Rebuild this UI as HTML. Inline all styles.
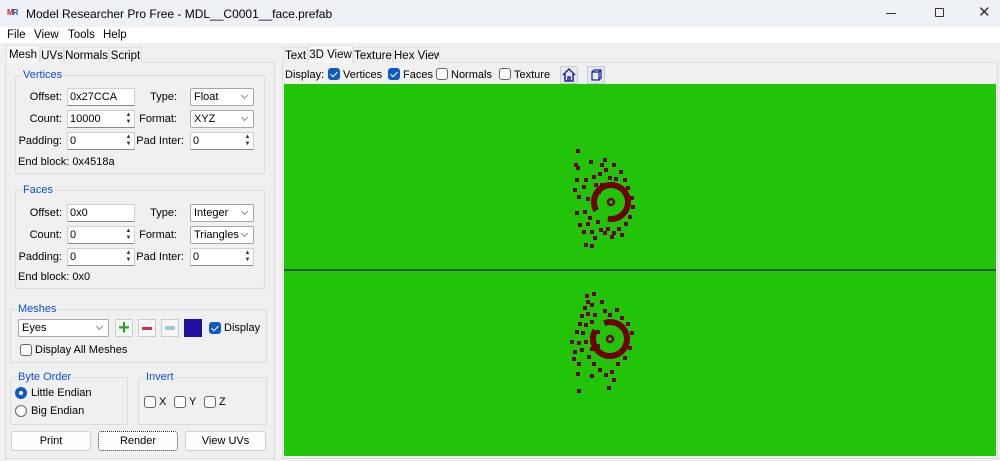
<!DOCTYPE html>
<html><head><meta charset="utf-8"><style>
*{box-sizing:border-box;margin:0;padding:0}
body{width:1000px;height:461px;overflow:hidden;background:#f0f0f0;font-family:"Liberation Sans",sans-serif;font-size:11px;color:#000;position:relative}
.a{position:absolute;white-space:nowrap}
.title{left:0;top:0;width:1000px;height:27px;background:#eef1f6}
.menu{left:0;top:27px;width:1000px;height:16px;background:#fff}
.grp{position:absolute;border:1px solid #dcdcdc;border-radius:2px}
.gl{position:absolute;top:-7px;left:6px;background:#f0f0f0;color:#0a4fd6;padding:0 1px;font-size:11px}
.inp{position:absolute;background:#fff;border:1px solid #d0d0d0;border-bottom-color:#888;height:18px;padding:2px 2px;font-size:11px}
.cmb{position:absolute;background:#fff;border:1px solid #a8a8a8;height:18px;padding:2px 3px;font-size:11px;border-radius:2px}
.cmb:after{content:"";position:absolute;right:6px;top:4px;width:4px;height:4px;border-right:1px solid #888;border-bottom:1px solid #888;transform:rotate(45deg)}
.spin{position:absolute;right:1px;top:1px;width:9px;height:14px;font-size:6px;line-height:7px;color:#333;text-align:center}
.lb{position:absolute;text-align:right;width:50px}
.cb{position:absolute;width:12px;height:12px;border:1px solid #666;border-radius:3px;background:#fff}
.cb.on{background:#0f5cc0;border-color:#0f5cc0}
.cb.on:after{content:"";position:absolute;left:3px;top:1px;width:3px;height:6px;border-right:1.5px solid #fff;border-bottom:1.5px solid #fff;transform:rotate(45deg)}
.btn{position:absolute;background:#fdfdfd;border:1px solid #d0d0d0;border-radius:3px;text-align:center;line-height:18px;height:20px}
.tab{position:absolute;top:47px;height:16px;padding-top:2px;background:#f0f0f0;border:1px solid #e2e2e2;border-bottom:none;font-size:11.5px;white-space:nowrap;text-align:center;overflow:hidden}
</style></head><body>
<div class="a title"></div>
<div class="a" style="left:7px;top:8px;font-size:8px;font-weight:bold;color:#d02030;letter-spacing:-1px">M<span style="color:#2050c0">R</span></div>
<div class="a" style="left:26px;top:7px;font-size:12px">Model Researcher Pro Free - MDL__C0001__face.prefab</div>
<div class="a" style="left:886px;top:13px;width:10px;height:1px;background:#333"></div>
<div class="a" style="left:935px;top:8px;width:9px;height:9px;border:1px solid #333;border-radius:1px"></div>
<div class="a" style="left:978px;top:3px;font-size:15px;color:#333">✕</div>
<div class="a menu"></div>
<div class="a" style="left:7px;top:29px;font-size:11.5px">File</div>
<div class="a" style="left:34px;top:29px;font-size:11.5px">View</div>
<div class="a" style="left:68px;top:29px;font-size:11.5px">Tools</div>
<div class="a" style="left:103px;top:29px;font-size:11.5px">Help</div>

<div class="a" style="left:5px;top:62px;width:270px;height:397px;border:1px solid #dcdcdc;background:#f0f0f0"></div>
<div class="tab" style="left:6px;top:45px;height:18px;background:#f9f9f9;padding-top:3px;width:34px">Mesh</div>
<div class="tab" style="left:40px;width:24px">UVs</div>
<div class="tab" style="left:64px;width:45px">Normals</div>
<div class="tab" style="left:109px;width:33px">Script</div>

<div class="grp" style="left:15px;top:75px;width:250px;height:99px"><div class="gl">Vertices</div></div>
<div class="lb" style="left:12px;top:91px">Offset:</div>
<div class="inp" style="left:67px;top:88px;width:68px">0x27CCA</div>
<div class="lb" style="left:127px;top:91px">Type:</div>
<div class="cmb" style="left:190px;top:88px;width:64px">Float</div>
<div class="lb" style="left:12px;top:113px">Count:</div>
<div class="inp" style="left:67px;top:110px;width:68px">10000<div class="spin">▲<br>▼</div></div>
<div class="lb" style="left:127px;top:113px">Format:</div>
<div class="cmb" style="left:190px;top:110px;width:64px">XYZ</div>
<div class="lb" style="left:12px;top:135px">Padding:</div>
<div class="inp" style="left:67px;top:132px;width:68px">0<div class="spin">▲<br>▼</div></div>
<div class="lb" style="left:134px;top:135px">Pad Inter:</div>
<div class="inp" style="left:190px;top:132px;width:64px">0<div class="spin">▲<br>▼</div></div>
<div class="a" style="left:18px;top:156px">End block: 0x4518a</div>

<div class="grp" style="left:15px;top:190px;width:250px;height:99px"><div class="gl">Faces</div></div>
<div class="lb" style="left:12px;top:207px">Offset:</div>
<div class="inp" style="left:67px;top:204px;width:68px">0x0</div>
<div class="lb" style="left:127px;top:207px">Type:</div>
<div class="cmb" style="left:190px;top:204px;width:64px">Integer</div>
<div class="lb" style="left:12px;top:229px">Count:</div>
<div class="inp" style="left:67px;top:226px;width:68px">0<div class="spin">▲<br>▼</div></div>
<div class="lb" style="left:127px;top:229px">Format:</div>
<div class="cmb" style="left:190px;top:226px;width:64px">Triangles</div>
<div class="lb" style="left:12px;top:251px">Padding:</div>
<div class="inp" style="left:67px;top:248px;width:68px">0<div class="spin">▲<br>▼</div></div>
<div class="lb" style="left:134px;top:251px">Pad Inter:</div>
<div class="inp" style="left:190px;top:248px;width:64px">0<div class="spin">▲<br>▼</div></div>
<div class="a" style="left:18px;top:271px">End block: 0x0</div>

<div class="grp" style="left:10px;top:309px;width:257px;height:54px"><div class="gl">Meshes</div></div>
<div class="cmb" style="left:18px;top:319px;width:91px">Eyes</div>
<div class="a" style="left:115px;top:319px;width:18px;height:18px;border:1px solid #ccc;background:#f6f6f6;color:#2ca02c;font-size:20px;font-weight:bold;line-height:16px;text-align:center">+</div>
<div class="a" style="left:138px;top:319px;width:18px;height:18px;border:1px solid #ccc;background:#f6f6f6"><div class="a" style="left:3px;top:7px;width:10px;height:3px;background:#d03040"></div></div>
<div class="a" style="left:161px;top:319px;width:18px;height:18px;border:1px solid #ccc;background:#f6f6f6"><div class="a" style="left:3px;top:6px;width:10px;height:4px;background:#9ccbe0"></div></div>
<div class="a" style="left:184px;top:319px;width:18px;height:18px;background:#1f10a0"></div>
<div class="cb on" style="left:209px;top:322px"></div>
<div class="a" style="left:224px;top:322px">Display</div>
<div class="cb" style="left:20px;top:344px"></div>
<div class="a" style="left:35px;top:344px">Display All Meshes</div>

<div class="grp" style="left:10px;top:377px;width:118px;height:48px"><div class="gl">Byte Order</div></div>
<div class="a" style="left:15px;top:387px;width:12px;height:12px;border-radius:50%;background:#0f5cc0"><div class="a" style="left:4px;top:4px;width:4px;height:4px;border-radius:50%;background:#fff"></div></div>
<div class="a" style="left:31px;top:387px">Little Endian</div>
<div class="a" style="left:15px;top:405px;width:12px;height:12px;border-radius:50%;border:1px solid #666;background:#fff"></div>
<div class="a" style="left:31px;top:405px">Big Endian</div>
<div class="grp" style="left:138px;top:377px;width:129px;height:48px"><div class="gl">Invert</div></div>
<div class="cb" style="left:144px;top:396px"></div><div class="a" style="left:159px;top:396px">X</div>
<div class="cb" style="left:174px;top:396px"></div><div class="a" style="left:189px;top:396px">Y</div>
<div class="cb" style="left:204px;top:396px"></div><div class="a" style="left:219px;top:396px">Z</div>

<div class="btn" style="left:11px;top:431px;width:80px">Print</div>
<div class="btn" style="left:98px;top:431px;width:80px;border:1px dotted #333">Render</div>
<div class="btn" style="left:185px;top:431px;width:81px">View UVs</div>

<div class="a" style="left:282px;top:62px;width:716px;height:397px;border:1px solid #dcdcdc"></div>
<div class="tab" style="left:283px;width:25px">Text</div>
<div class="tab" style="left:308px;top:45px;height:18px;background:#f9f9f9;width:45px;padding-top:3px">3D View</div>
<div class="tab" style="left:353px;width:40px">Texture</div>
<div class="tab" style="left:393px;width:47px">Hex View</div>
<div class="a" style="left:285px;top:69px">Display:</div>
<div class="cb on" style="left:328px;top:68px"></div><div class="a" style="left:343px;top:69px">Vertices</div>
<div class="cb on" style="left:388px;top:68px"></div><div class="a" style="left:403px;top:69px">Faces</div>
<div class="cb" style="left:436px;top:68px"></div><div class="a" style="left:451px;top:69px">Normals</div>
<div class="cb" style="left:499px;top:68px"></div><div class="a" style="left:514px;top:69px">Texture</div>
<div class="a" style="left:560px;top:66px;width:18px;height:18px;border:1px solid #ccc;background:#e8e8f0"><svg width="16" height="16" viewBox="0 0 16 16"><path d="M2 8L8 2L14 8M4 7V14H12V7M7 14V10H9V14" fill="none" stroke="#1a2a9a" stroke-width="1.5"/></svg></div>
<div class="a" style="left:587px;top:66px;width:18px;height:18px;border:1px solid #ccc;background:#e8e8f0"><svg width="16" height="16" viewBox="0 0 16 16"><path d="M4 5H11V13H4Z M4 5L6 3H13V11L11 13 M11 5L13 3" fill="none" stroke="#1a2a9a" stroke-width="1.3"/></svg></div>

<svg class="a" style="left:284px;top:84px" width="712" height="372" viewBox="284 84 712 372">
<rect x="284" y="84" width="712" height="372" fill="#22c40a"/>
<rect x="284" y="269" width="712" height="2" fill="#2a5a22"/>
<g fill="none" stroke="#6e0000">
<circle cx="611" cy="202" r="17" stroke-width="6" stroke-dasharray="92 15" transform="rotate(150 611 202)"/>
<circle cx="611" cy="202" r="3" stroke-width="2.5"/>
<circle cx="610" cy="339" r="17" stroke-width="6" stroke-dasharray="95 12" transform="rotate(250 610 339)"/>
<circle cx="610" cy="339" r="3" stroke-width="2.5"/>
</g>
<g fill="#6e0000">
<rect x="576" y="149" width="4" height="4"/><rect x="574" y="163" width="4" height="4"/><rect x="576" y="166" width="4" height="4"/><rect x="575" y="178" width="4" height="4"/><rect x="573" y="188" width="4" height="4"/><rect x="577" y="195" width="4" height="4"/><rect x="575" y="211" width="4" height="4"/><rect x="578" y="223" width="4" height="4"/><rect x="582" y="230" width="4" height="4"/><rect x="584" y="243" width="4" height="4"/><rect x="590" y="244" width="4" height="4"/><rect x="584" y="178" width="4" height="4"/><rect x="582" y="185" width="4" height="4"/><rect x="586" y="197" width="4" height="4"/><rect x="583" y="210" width="4" height="4"/><rect x="588" y="216" width="4" height="4"/><rect x="586" y="222" width="4" height="4"/><rect x="590" y="230" width="4" height="4"/><rect x="593" y="236" width="4" height="4"/><rect x="592" y="175" width="4" height="4"/><rect x="594" y="183" width="4" height="4"/><rect x="589" y="160" width="4" height="4"/><rect x="593" y="205" width="4" height="4"/><rect x="596" y="220" width="4" height="4"/><rect x="599" y="228" width="4" height="4"/><rect x="603" y="231" width="4" height="4"/><rect x="606" y="227" width="4" height="4"/><rect x="600" y="163" width="4" height="4"/><rect x="603" y="158" width="4" height="4"/><rect x="604" y="168" width="4" height="4"/><rect x="598" y="172" width="4" height="4"/><rect x="608" y="176" width="4" height="4"/><rect x="614" y="177" width="4" height="4"/><rect x="612" y="163" width="4" height="4"/><rect x="619" y="170" width="4" height="4"/><rect x="623" y="178" width="4" height="4"/><rect x="626" y="186" width="4" height="4"/><rect x="630" y="196" width="4" height="4"/><rect x="631" y="205" width="4" height="4"/><rect x="628" y="215" width="4" height="4"/><rect x="624" y="222" width="4" height="4"/><rect x="617" y="227" width="4" height="4"/><rect x="612" y="231" width="4" height="4"/><rect x="620" y="233" width="4" height="4"/><rect x="610" y="235" width="4" height="4"/><rect x="597" y="190" width="4" height="4"/><rect x="600" y="183" width="4" height="4"/>
<rect x="585" y="294" width="4" height="4"/><rect x="592" y="292" width="4" height="4"/><rect x="586" y="300" width="4" height="4"/><rect x="583" y="306" width="4" height="4"/><rect x="590" y="303" width="4" height="4"/><rect x="580" y="314" width="4" height="4"/><rect x="586" y="312" width="4" height="4"/><rect x="593" y="313" width="4" height="4"/><rect x="578" y="322" width="4" height="4"/><rect x="584" y="323" width="4" height="4"/><rect x="590" y="320" width="4" height="4"/><rect x="575" y="330" width="4" height="4"/><rect x="581" y="331" width="4" height="4"/><rect x="570" y="340" width="4" height="4"/><rect x="577" y="341" width="4" height="4"/><rect x="584" y="340" width="4" height="4"/><rect x="573" y="350" width="4" height="4"/><rect x="580" y="348" width="4" height="4"/><rect x="590" y="347" width="4" height="4"/><rect x="572" y="357" width="4" height="4"/><rect x="577" y="362" width="4" height="4"/><rect x="587" y="355" width="4" height="4"/><rect x="592" y="362" width="4" height="4"/><rect x="576" y="372" width="4" height="4"/><rect x="590" y="374" width="4" height="4"/><rect x="577" y="389" width="4" height="4"/><rect x="598" y="368" width="4" height="4"/><rect x="604" y="373" width="4" height="4"/><rect x="610" y="370" width="4" height="4"/><rect x="616" y="362" width="4" height="4"/><rect x="612" y="378" width="4" height="4"/><rect x="607" y="386" width="4" height="4"/><rect x="603" y="309" width="4" height="4"/><rect x="608" y="313" width="4" height="4"/><rect x="615" y="308" width="4" height="4"/><rect x="620" y="316" width="4" height="4"/><rect x="626" y="322" width="4" height="4"/><rect x="630" y="331" width="4" height="4"/><rect x="628" y="346" width="4" height="4"/><rect x="623" y="356" width="4" height="4"/><rect x="596" y="330" width="4" height="4"/><rect x="596" y="344" width="4" height="4"/><rect x="600" y="300" width="4" height="4"/>
</g>
</svg>
</body></html>
